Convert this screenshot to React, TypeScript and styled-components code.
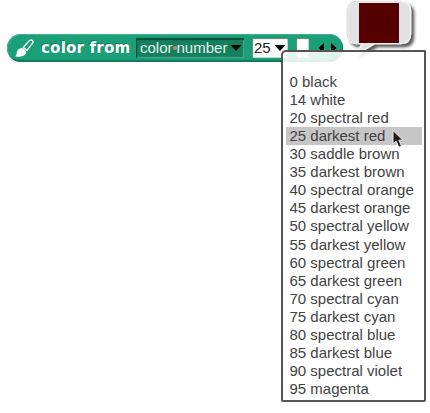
import React from "react";
import styled, { createGlobalStyle } from "styled-components";

const GlobalStyle = createGlobalStyle`
  body { margin: 0; background: #fff; overflow: hidden; }
`;

const Stage = styled.main`
  position: relative;
  width: 430px;
  height: 413px;
  padding: 34px 0 0 7px;
  box-sizing: border-box;
  overflow: hidden;
  background: #fefefe;
  font-family: "Liberation Sans", Arial, sans-serif;
`;

const Block = styled.div`
  display: flex;
  align-items: center;
  width: 336px;
  height: 28px;
  padding-left: 7px;
  box-sizing: border-box;
  border-radius: 14px;
  background: #1a9f76;
  box-shadow: inset 1px 1px 1px #43b491, inset -1px -2px 1px #107b59;
`;

const BlockLabel = styled.span`
  width: 90px;
  margin-left: 6px;
  color: #fff;
  font: bold 15px/20px "DejaVu Sans", sans-serif;
  letter-spacing: 0.22px;
  white-space: nowrap;
  text-shadow: -1px -1px 0 #12805e;
`;

const Slot = styled.div<{ $width: number; $gap: number; $dark?: boolean }>`
  display: flex;
  align-items: center;
  justify-content: space-between;
  width: ${(p) => p.$width}px;
  height: 20px;
  margin-left: ${(p) => p.$gap}px;
  padding: 0 2px 0 ${(p) => (p.$dark ? 4 : 2)}px;
  box-sizing: border-box;
  background: ${(p) => (p.$dark ? "#157f5e" : "#fff")};
  box-shadow: ${(p) =>
    p.$dark
      ? "inset 1px 2px 1px #0a5038, inset -1px -1px 1px #46ae8e"
      : "inset 1px 1px 1px #55806f, inset -1px -1px 0 #b5ddd0"};
  color: ${(p) => (p.$dark ? "#e3f2ed" : "#222")};
  font-size: 15px;
  line-height: 18px;
  white-space: nowrap;
`;

const SpaceDot = styled.span`
  display: inline-block;
  width: 4px;
  height: 4px;
  border-radius: 50%;
  background: #c9857a;
  vertical-align: 3px;
`;

const Arrows = styled.svg`
  margin-left: 9px;
`;

const Bubble = styled.svg`
  position: absolute;
  left: 340px;
  top: 0;
`;

const Menu = styled.ul`
  position: absolute;
  left: 281px;
  top: 50px;
  width: 145px;
  height: 352px;
  margin: 0;
  padding: 21.1px 2px 0 3px;
  box-sizing: border-box;
  border: 2px solid #555;
  border-radius: 5px 1px 2px 2px;
  background: rgba(255, 255, 255, 0.88);
  list-style: none;
`;

const MenuItem = styled.li<{ $active?: boolean }>`
  height: 18.06px;
  padding-left: 3.5px;
  background: ${(p) => (p.$active ? "#c6c6c6" : "transparent")};
  color: #424242;
  font-size: 15px;
  line-height: 18px;
  white-space: nowrap;
`;

const Cursor = styled.svg`
  position: absolute;
  left: 391px;
  top: 129px;
`;

const colors = [
  "0 black", "14 white", "20 spectral red", "25 darkest red",
  "30 saddle brown", "35 darkest brown", "40 spectral orange",
  "45 darkest orange", "50 spectral yellow", "55 darkest yellow",
  "60 spectral green", "65 darkest green", "70 spectral cyan",
  "75 darkest cyan", "80 spectral blue", "85 darkest blue",
  "90 spectral violet", "95 magenta",
];

const DropArrow = () => (
  <svg width="12" height="8" viewBox="0 0 12 8">
    <path d="M0.5 1H11.5L6 7Z" fill="#000" />
  </svg>
);

const Brush = () => (
  <svg width="21" height="22" viewBox="0 0 21 22">
    <path d="M9.3 10.5 15.4 3.6Q18.2 2 19.3 5.2L12.9 13.4Z" fill="none" stroke="#e6f5ef" strokeWidth="1.4" />
    <path d="M1.2 19.2C4 17.5 1.2 14 5.7 11.5Q8 10.3 9.5 11.6L12 14.2Q12.8 17.1 9.2 18.8Q5.4 20.4 1.2 19.2Z" fill="#fff" />
  </svg>
);

export default function App() {
  return (
    <Stage>
      <GlobalStyle />
      <Block>
        <Brush />
        <BlockLabel>color from</BlockLabel>
        <Slot $width={108} $gap={5} $dark>
          <span>color<SpaceDot />number</span>
          <DropArrow />
        </Slot>
        <Slot $width={36} $gap={8}>
          <span>25</span>
          <DropArrow />
        </Slot>
        <Slot $width={13} $gap={8} />
        <Arrows width="20" height="12" viewBox="0 0 20 12">
          <path d="M6 1V11L0.5 6ZM13 1V11L18.5 6Z" fill="#000" />
        </Arrows>
      </Block>
      <Bubble width="80" height="60" viewBox="0 0 80 60">
        <defs>
          <filter id="bubbleShadow" x="-10%" y="-10%" width="130%" height="130%">
            <feDropShadow dx="3" dy="3" stdDeviation="1.7" floodColor="#000" floodOpacity="0.65" />
          </filter>
        </defs>
        <path
          d="M17 1.8H61Q70.5 1.8 70.5 11V34Q70.5 43.5 61 43.5H35L17 54L22 43.5H17Q7.5 43.5 7.5 34V11Q7.5 1.8 17 1.8Z"
          fill="#e2e2e2" stroke="#f2f2f2" strokeWidth="1.4" filter="url(#bubbleShadow)"
        />
        <path d="M22 43H17Q7 43 7 34V11Q7 1.2 17 1.2H61" fill="none" stroke="#d2d2d2" strokeWidth="0.6" />
        <rect x="19" y="3" width="40" height="40" fill="#550000" />
      </Bubble>
      <Menu>
        {colors.map((name) => (
          <MenuItem key={name} $active={name === "25 darkest red"}>{name}</MenuItem>
        ))}
      </Menu>
      <Cursor width="14" height="20" viewBox="0 0 14 20">
        <path d="M2 1.5V15L5.2 12.2L7.8 18.2L10.5 17L7.9 11.2H12Z" fill="#1d1d1d" stroke="#eee" strokeWidth="1" />
      </Cursor>
    </Stage>
  );
}
